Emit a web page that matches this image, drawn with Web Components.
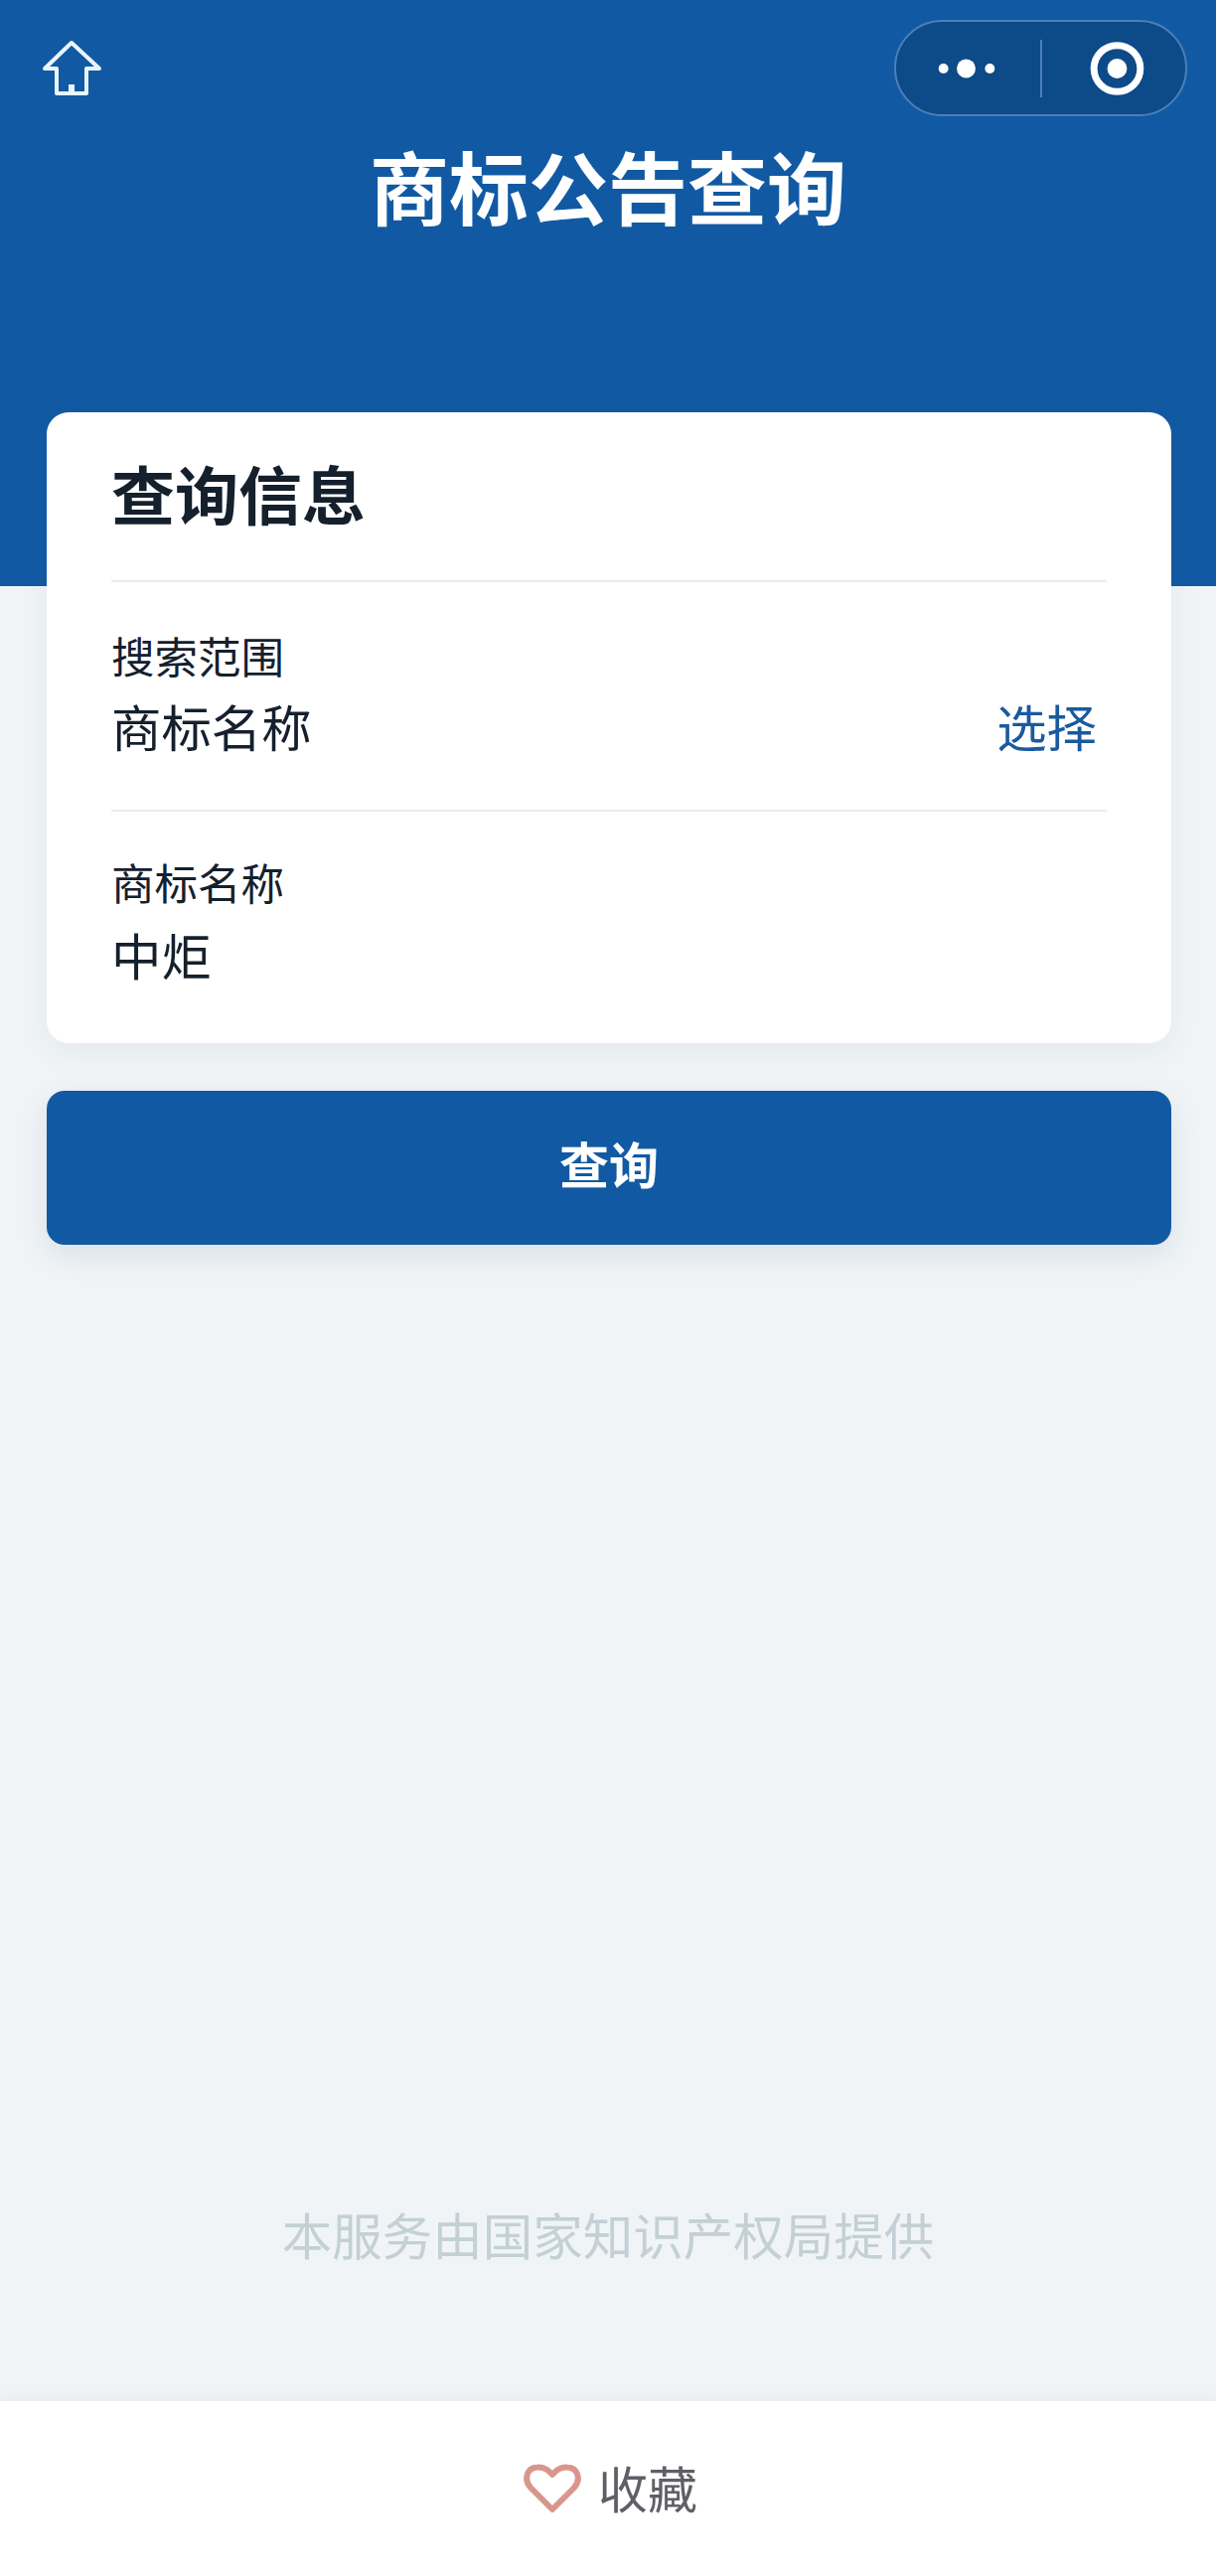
<!DOCTYPE html>
<html lang="zh-CN">
<head>
<meta charset="utf-8">
<title>商标公告查询</title>
<style>
html, body {
    margin: 0;
    padding: 0;
}
body {
    background: #f0f4f7;
    color: #15202d;
    font-family: "Noto Sans CJK SC", "Noto Sans", sans-serif;
}
</style>
</head>
<body>

<tm-page>
    <tm-header slot="header" title="商标公告查询"></tm-header>
    <tm-card heading="查询信息">
        <tm-row label="搜索范围" value="商标名称" action="选择" style="--row-top: 46px; --row-gap: 13px; --row-bottom: 54px"></tm-row>
        <tm-row label="商标名称" value="中炬" style="--row-top: 43px; --row-gap: 15px; --row-bottom: 58px"></tm-row>
    </tm-card>
    <tm-button>查询</tm-button>
    <tm-note slot="note">本服务由国家知识产权局提供</tm-note>
    <tm-favourite slot="bar">收藏</tm-favourite>
</tm-page>

<script>
(function() {
    // small helper: every element here just clones its template into an open shadow root
    function makeTemplate(html) {
        const template = document.createElement('template');
        template.innerHTML = html;
        return template;
    }

    class Base extends HTMLElement {
        constructor() {
            super();
            this.attachShadow({mode: 'open'});
            this.shadowRoot.appendChild(this.constructor.template.content.cloneNode(true));
        }

        fill(selector, value) {
            this.shadowRoot.querySelector(selector).textContent = value || '';
        }
    }

    /*
     * Page frame: blue header, content column, note pushed down, white bar
     */
    class TmPage extends Base {
        static get template() { return pageTemplate; }
    }
    const pageTemplate = makeTemplate(`
<style>
:host {
    display: flex;
    flex-direction: column;
    height: 2593px;
}
.content {
    display: flex;
    flex-direction: column;
    flex: 1;
    padding: 0 45px 0 47px;
    margin-top: -175px;
}
.note {
    display: block;
    margin-top: auto;
    padding-bottom: 134px;
}
</style>
<slot name="header"></slot>
<div class="content">
    <slot></slot>
    <div class="note"><slot name="note"></slot></div>
</div>
<slot name="bar"></slot>
`);

    /*
     * Header with home icon, mini program capsule and the title
     */
    class TmHeader extends Base {
        static get template() { return headerTemplate; }

        connectedCallback() {
            this.fill('h1', this.getAttribute('title'));
        }
    }
    const headerTemplate = makeTemplate(`
<style>
:host {
    display: block;
    height: 590px;
    background: #115aa3;
    box-sizing: border-box;
    padding-top: 20px;
}
.top {
    display: flex;
    justify-content: space-between;
    align-items: flex-start;
    padding: 0 29px 0 40px;
}
.home {
    display: block;
    width: 66px;
    height: 62px;
    margin-top: 18px;
}
.capsule {
    display: flex;
    align-items: center;
    box-sizing: border-box;
    width: 295px;
    height: 97px;
    border: 2px solid #4c7fb9;
    border-radius: 49px;
    background: #0d4a88;
}
.capsule svg {
    display: block;
}
.more {
    width: 146px;
    height: 93px;
}
.line {
    width: 2px;
    height: 58px;
    background: #4c7fb9;
}
.target {
    width: 145px;
    height: 93px;
}
h1 {
    margin: 18px 0 0;
    height: 100px;
    font-size: 80px;
    line-height: 100px;
    font-weight: 700;
    color: #fff;
    text-align: center;
}
</style>
<div class="top">
    <svg class="home" viewBox="0 0 66 62" fill="none">
        <path d="M32 5 L5 31 H17 V56 H47 V31 H60 Z" stroke="#e9f5ff" stroke-width="4" stroke-linejoin="round"/>
        <rect x="29" y="47" width="6" height="9" fill="#e9f5ff"/>
    </svg>
    <div class="capsule">
        <svg class="more" viewBox="0 0 146 93" fill="#fff">
            <circle cx="48" cy="47" r="5"/>
            <circle cx="71" cy="47" r="9.5"/>
            <circle cx="95" cy="47" r="5"/>
        </svg>
        <div class="line"></div>
        <svg class="target" viewBox="0 0 145 93" fill="none">
            <circle cx="76" cy="47" r="23.5" stroke="#fff" stroke-width="7"/>
            <circle cx="76" cy="47" r="10" fill="#fff"/>
        </svg>
    </div>
</div>
<h1></h1>
`);

    /*
     * White card holding the form rows
     */
    class TmCard extends Base {
        static get template() { return cardTemplate; }

        connectedCallback() {
            this.fill('h2', this.getAttribute('heading'));
        }
    }
    const cardTemplate = makeTemplate(`
<style>
:host {
    display: block;
    box-sizing: border-box;
    height: 635px;
    padding: 0 65px;
    background: #fff;
    border-radius: 22px;
    box-shadow: 0 8px 30px rgba(60, 80, 100, 0.07);
}
h2 {
    margin: 0;
    box-sizing: border-box;
    height: 171px;
    padding-top: 32px;
    font-size: 64px;
    line-height: 96px;
    font-weight: 700;
    color: #15202d;
    border-bottom: 2px solid #e9ebed;
}
</style>
<h2></h2>
<slot></slot>
`);

    /*
     * One form row: small label, big value, optional link on the right
     */
    class TmRow extends Base {
        static get template() { return rowTemplate; }

        connectedCallback() {
            this.fill('.label', this.getAttribute('label'));
            this.fill('.value', this.getAttribute('value'));
            this.fill('.action', this.getAttribute('action'));
        }
    }
    const rowTemplate = makeTemplate(`
<style>
:host {
    display: block;
    box-sizing: border-box;
    padding: var(--row-top) 0 var(--row-bottom);
    border-bottom: 2px solid #e9ebed;
}
:host(:last-child) {
    border-bottom: 0;
}
.label {
    font-size: 43.5px;
    line-height: 56px;
    color: #15202d;
}
.line {
    display: flex;
    justify-content: space-between;
    margin-top: var(--row-gap);
    padding-right: 10px;
}
.value, .action {
    font-size: 50.4px;
    line-height: 60px;
}
.value {
    color: #15202d;
}
.action {
    color: #1a5a9e;
}
</style>
<div class="label"></div>
<div class="line">
    <span class="value"></span>
    <span class="action"></span>
</div>
`);

    class TmButton extends Base {
        static get template() { return buttonTemplate; }
    }
    const buttonTemplate = makeTemplate(`
<style>
:host {
    display: flex;
    align-items: center;
    justify-content: center;
    box-sizing: border-box;
    height: 155px;
    padding-bottom: 12px;
    margin-top: 48px;
    background: #115aa3;
    border-radius: 18px;
    box-shadow: 0 10px 30px rgba(60, 80, 100, 0.12);
    color: #fff;
    font-size: 50px;
    font-weight: 700;
}
</style>
<slot></slot>
`);

    class TmNote extends Base {
        static get template() { return noteTemplate; }
    }
    const noteTemplate = makeTemplate(`
<style>
:host {
    display: block;
    margin-left: -47px;
    margin-right: -45px;
    height: 70px;
    font-size: 50.5px;
    line-height: 70px;
    color: #c3d0d5;
    text-align: center;
}
</style>
<slot></slot>
`);

    /*
     * White bottom bar with the heart and its label
     */
    class TmFavourite extends Base {
        static get template() { return favouriteTemplate; }
    }
    const favouriteTemplate = makeTemplate(`
<style>
:host {
    display: flex;
    align-items: center;
    justify-content: center;
    gap: 17px;
    height: 176px;
    padding-left: 5px;
    box-sizing: border-box;
    background: #fff;
    box-shadow: 0 -2px 12px rgba(60, 80, 100, 0.06);
    color: #5f6066;
    font-size: 50px;
    position: relative;
}
svg {
    display: block;
    width: 58px;
    height: 50px;
}
.text {
    padding-bottom: 5px;
}
</style>
<svg viewBox="0 0 58 50" fill="none">
    <path d="M29 46 L7 24 C0 16 3 4 14 3.5 C20 3 25 6 29 11 C33 6 38 3 44 3.5 C55 4 58 16 51 24 Z" stroke="#d8968c" stroke-width="6" stroke-linejoin="round"/>
</svg>
<span class="text"><slot></slot></span>
`);

    customElements.define('tm-page', TmPage);
    customElements.define('tm-header', TmHeader);
    customElements.define('tm-card', TmCard);
    customElements.define('tm-row', TmRow);
    customElements.define('tm-button', TmButton);
    customElements.define('tm-note', TmNote);
    customElements.define('tm-favourite', TmFavourite);
})();
</script>
</body>
</html>
